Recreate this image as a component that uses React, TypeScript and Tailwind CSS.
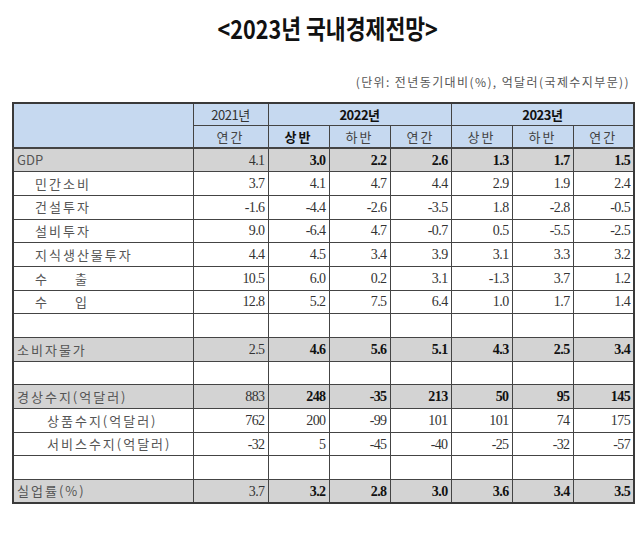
import React from "react";

type Row = {
  label: string;
  indent?: number;
  gray?: boolean;
  values?: string[];
  spaced?: [string, string];
};

const rows: Row[] = [
  { label: "GDP", gray: true, values: ["4.1", "3.0", "2.2", "2.6", "1.3", "1.7", "1.5"] },
  { label: "민간소비", indent: 18, values: ["3.7", "4.1", "4.7", "4.4", "2.9", "1.9", "2.4"] },
  { label: "건설투자", indent: 18, values: ["-1.6", "-4.4", "-2.6", "-3.5", "1.8", "-2.8", "-0.5"] },
  { label: "설비투자", indent: 18, values: ["9.0", "-6.4", "4.7", "-0.7", "0.5", "-5.5", "-2.5"] },
  { label: "지식생산물투자", indent: 18, values: ["4.4", "4.5", "3.4", "3.9", "3.1", "3.3", "3.2"] },
  { label: "", spaced: ["수", "출"], indent: 18, values: ["10.5", "6.0", "0.2", "3.1", "-1.3", "3.7", "1.2"] },
  { label: "", spaced: ["수", "입"], indent: 18, values: ["12.8", "5.2", "7.5", "6.4", "1.0", "1.7", "1.4"] },
  { label: "" },
  { label: "소비자물가", gray: true, values: ["2.5", "4.6", "5.6", "5.1", "4.3", "2.5", "3.4"] },
  { label: "" },
  { label: "경상수지(억달러)", gray: true, values: ["883", "248", "-35", "213", "50", "95", "145"] },
  { label: "상품수지(억달러)", indent: 30, values: ["762", "200", "-99", "101", "101", "74", "175"] },
  { label: "서비스수지(억달러)", indent: 30, values: ["-32", "5", "-45", "-40", "-25", "-32", "-57"] },
  { label: "" },
  { label: "실업률(%)", gray: true, values: ["3.7", "3.2", "2.8", "3.0", "3.6", "3.4", "3.5"] },
];

const kr = "font-['Noto_Sans_CJK_KR',sans-serif]";
const num = "font-['Liberation_Serif',serif]";

export default function App() {
  return (
    <div className="w-[640px] h-[536px] bg-white overflow-hidden">
      <div className="flex justify-center pt-[11px] pl-[16px]">
        <h1
          className={`inline-block scale-x-[0.83] text-[26px] leading-[34px] font-bold text-[#111] ${kr}`}
        >
          &lt;2023년 국내경제전망&gt;
        </h1>
      </div>
      <div
        className={`mt-[29px] pr-[10px] text-right text-[12px] leading-[16px] tracking-[1.4px] text-[#555] ${kr}`}
      >
        (단위: 전년동기대비(%), 억달러(국제수지부문))
      </div>
      <table className="ml-[12px] mt-[12px] border-collapse border-2 border-[#3a3a3a] table-fixed w-[621px]">
        <colgroup>
          <col className="w-[180px]" />
          <col className="w-[75px]" />
          <col className="w-[61px]" />
          <col className="w-[61px]" />
          <col className="w-[61px]" />
          <col className="w-[61px]" />
          <col className="w-[61px]" />
          <col className="w-[61px]" />
        </colgroup>
        <thead>
          <tr className="h-[22px] bg-[#c6d9f0] text-[13px] text-[#333]">
            <th rowSpan={2} className="border border-[#444] border-b-2" />
            <td className={`border border-[#444] text-center ${kr} tracking-[-0.5px]`}>2021년</td>
            <td colSpan={3} className={`border border-[#444] text-center font-bold text-[#111] ${kr} tracking-[-0.5px]`}>
              2022년
            </td>
            <td colSpan={3} className={`border border-[#444] text-center font-bold text-[#111] ${kr} tracking-[-0.5px]`}>
              2023년
            </td>
          </tr>
          <tr className={`h-[23px] bg-[#c6d9f0] text-[13px] text-[#444] ${kr} tracking-[2px]`}>
            <td className="border border-[#444] border-b-2 text-center">연간</td>
            <td className="border border-[#444] border-b-2 text-center font-bold text-[#111]">상반</td>
            <td className="border border-[#444] border-b-2 text-center">하반</td>
            <td className="border border-[#444] border-b-2 text-center">연간</td>
            <td className="border border-[#444] border-b-2 text-center">상반</td>
            <td className="border border-[#444] border-b-2 text-center">하반</td>
            <td className="border border-[#444] border-b-2 text-center">연간</td>
          </tr>
        </thead>
        <tbody>
          {rows.map((r, i) => (
            <tr key={i} className={`h-[23.7px] ${r.gray ? "bg-[#d3d3d3]" : "bg-white"}`}>
              <td
                className={`border border-[#444] text-[13px] text-[#555] ${kr} ${
                  r.label === "GDP" ? "tracking-normal text-[#333]" : "tracking-[2px]"
                }`}
                style={{ paddingLeft: 3 + (r.indent ?? 0) }}
              >
                {r.spaced ? (
                  <span className="flex">
                    <span className="w-[40px]">{r.spaced[0]}</span>
                    <span>{r.spaced[1]}</span>
                  </span>
                ) : (
                  r.label
                )}
              </td>
              {Array.from({ length: 7 }).map((_, j) => {
                const v = r.values?.[j] ?? "";
                const bold = j > 0 && r.gray;
                return (
                  <td
                    key={j}
                    className={`border border-[#444] text-right pr-[3px] text-[14px] tracking-[-0.6px] ${num} ${
                      bold ? "font-bold text-[#111]" : "text-[#333]"
                    }`}
                  >
                    {v}
                  </td>
                );
              })}
            </tr>
          ))}
        </tbody>
      </table>
    </div>
  );
}
